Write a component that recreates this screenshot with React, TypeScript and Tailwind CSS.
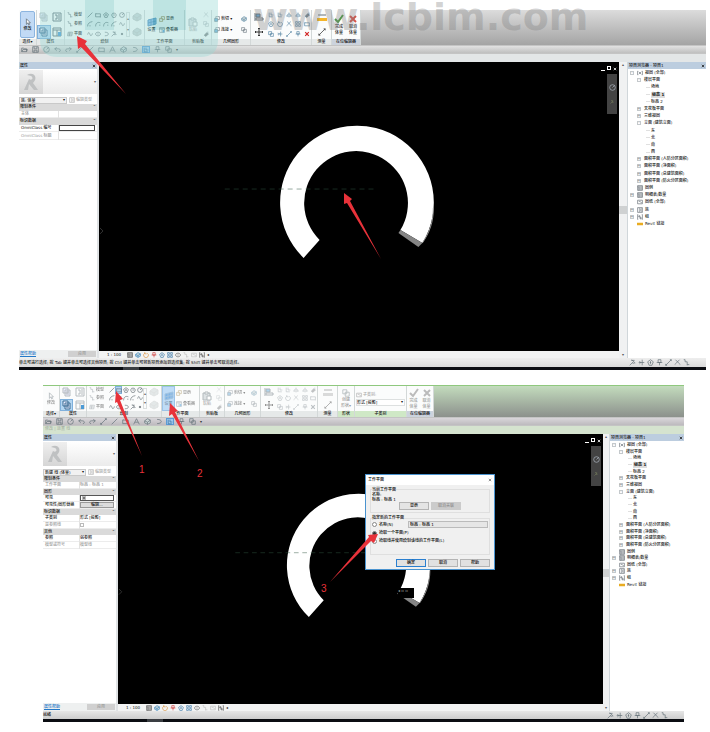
import { Fragment, type ReactNode } from 'react';
import clsx from 'clsx';

interface TreeNode {
  label: string;
  level: number;
  box?: '-' | '+';
  icon?: string;
  active?: boolean;
}

interface PropRow {
  label: string;
  group?: boolean;
  muted?: boolean;
  value?: string;
  kind?: 'focus' | 'check' | 'button' | 'uncheck';
}

const TREE: TreeNode[] = [
  { label: '视图 (全部)', level: 0, box: '-', icon: 'views' },
  { label: '楼层平面', level: 1, box: '-' },
  { label: '场地', level: 2 },
  { label: '标高 1', level: 2, active: true },
  { label: '标高 2', level: 2 },
  { label: '天花板平面', level: 1, box: '+' },
  { label: '三维视图', level: 1, box: '+' },
  { label: '立面 (建筑立面)', level: 1, box: '-' },
  { label: '东', level: 2 },
  { label: '北', level: 2 },
  { label: '南', level: 2 },
  { label: '西', level: 2 },
  { label: '面积平面 (人防分区面积)', level: 1, box: '+' },
  { label: '面积平面 (净面积)', level: 1, box: '+' },
  { label: '面积平面 (总建筑面积)', level: 1, box: '+' },
  { label: '面积平面 (防火分区面积)', level: 1, box: '+' },
  { label: '图例', level: 0, icon: 'legend' },
  { label: '明细表/数量', level: 0, box: '+', icon: 'legend' },
  { label: '图纸 (全部)', level: 0, icon: 'sheet' },
  { label: '族', level: 0, box: '+', icon: 'family' },
  { label: '组', level: 0, box: '+', icon: 'group' },
  { label: 'Revit 链接', level: 0, icon: 'link' },
];

const FAMILY_PROPS: PropRow[] = [
  { label: '限制条件', group: true },
  { label: '主体', muted: true },
  { label: '标识数据', group: true },
  { label: 'OmniClass 编号', kind: 'focus' },
  { label: 'OmniClass 标题', muted: true },
];

const LINE_PROPS: PropRow[] = [
  { label: '限制条件', group: true },
  { label: '工作平面', muted: true, value: '标高 : 标高 1' },
  { label: '图形', group: true },
  { label: '可见', kind: 'check' },
  { label: '可见性/图形替换', kind: 'button', value: '编辑...' },
  { label: '标识数据', group: true },
  { label: '子类别', value: '形式 [投影]' },
  { label: '是参照线', muted: true, kind: 'uncheck' },
  { label: '其他', group: true },
  { label: '参照', value: '弱参照' },
  { label: '模型或符号', muted: true, value: '模型线' },
];

// All glyphs live on a 10x10 grid
const ICONS: Record<string, ReactNode> = {
  cursor: <path d="M3 1v7l2-2 1 3 1-1-1-2h2z" fill="#fff" />,
  props: (
    <>
      <path d="M1 1h5v5H1zM3 3h5v6H3z" fill="#eef" />
      <path d="M4 5h3M4 7h3" />
    </>
  ),
  family: <path d="M1 1h8v8H1zM3 3h2v4H3M6 3h2M6 5h2M6 7h2" />,
  table: (
    <>
      <path d="M1 1h8v8H1zM1 3h8M5 3v6" />
      <path d="M6 5h3v4H6z" fill="#4c9bd6" stroke="none" />
    </>
  ),
  curve: <path d="M1 1h2v3h3v5M6 8h3" />,
  plane: <path d="M2 2h7L8 8H1zM2 5h6M5 2L4 8" />,
  line: <path d="M1 9L9 1" />,
  rect: <path d="M1 3h8v5H1zM1 3l1-1M9 8l0 1" />,
  poly: <path d="M5 1l4 3-2 5H3L1 4zM5 3v4M4 5h2" />,
  polyout: <path d="M3 2h4l2 3-2 4H3L1 5zM4 5h3" />,
  circle: <path d="M5 1a4 4 0 100 8 4 4 0 100-8M5 5l3-3" />,
  arc: <path d="M1 9c0-5 3-7 8-8M5 9V7" />,
  arc2: <path d="M1 9C1 4 4 1 9 3M8 6v2" />,
  spline: <path d="M1 6c2-6 3-3 4 0s3 2 4-2" />,
  ellipse: <path d="M1 5c0-4 8-4 8 0s-8 4-8 0M5 4v2" />,
  halfell: <path d="M3 2c8 0 8 6 0 6" />,
  pick: <path d="M1 9l5-5M4 1l5 5M3 2l5 0M5 6h3" />,
  dot: <path d="M4 4h2v2H4z" fill="#333" />,
  cube: (
    <>
      <path d="M1 4l4-3 4 2v4L5 9 1 7z" fill="#ccd6d6" />
      <path d="M1 4l4 2 4-3M5 6v3" />
    </>
  ),
  bluegrid: (
    <>
      <path d="M1 3l8-2v6l-8 2z" fill="#7fb4e6" />
      <path d="M1 6l8-2M4 2v6M7 2v6" />
    </>
  ),
  show: <path d="M1 4h5v5H1zM4 4V1h5v5H6M3 6h1" />,
  paste: (
    <>
      <path d="M1 2h7v7H1z" fill="#dde2e4" />
      <path d="M3 1h3v2H3zM5 5h4v4H5z" fill="#fff" />
    </>
  ),
  cut: <path d="M2 1l6 6M8 1L2 7M1 8h1M8 8h1" />,
  copy: <path d="M1 1h5v5H1zM4 4h5v5H4z" />,
  brush: <path d="M8 1v4M6 3l3 2-4 4-3-2z" fill="#888" />,
  bool: (
    <>
      <path d="M3 1h6v5H3z" fill="#fff" />
      <path d="M1 4h5v5H1z" fill="#73b1dc" />
    </>
  ),
  align: (
    <>
      <path d="M1 1v8" />
      <path d="M2 2h4v3H2z" fill="#67b0e2" />
      <path d="M2 6h7v2H2z" fill="#fff" />
    </>
  ),
  move: (
    <path d="M5 1v8M1 5h8M4 2l1-1 1 1M4 8l1 1 1-1M2 4L1 5l1 1M8 4l1 1-1 1" />
  ),
  offset: <path d="M2 1v7h6M5 1v4h4" />,
  mirror: <path d="M5 1v8M4 3L1 7h3M6 3l3 4H6" />,
  rotate: <path d="M7 2a4 4 0 11-4 0M3 0v3h3" />,
  array: <path d="M1 1h3v3H1zM6 1h3v3H6zM1 6h3v3H1zM6 6h3v3H6z" />,
  trim: <path d="M1 5h8M6 1v8M2 3l2 2-2 2" />,
  pin: <path d="M3 1h4v4H3zM1 5h8M5 5v4" />,
  del: <path d="M2 2l6 6M8 2L2 8" strokeWidth="2" />,
  measure: (
    <>
      <path d="M1 2h8" />
      <path d="M0 5h10v3H0z" fill="#f5b52a" stroke="none" />
    </>
  ),
  dim: <path d="M1 9L9 1M1 7v2h2M7 1h2v2" />,
  check: <path d="M1 5l3 3 5-7" strokeWidth="2" />,
  views: <path d="M2 2H1v6h1M8 2h1v6H8M3 3l4 4M7 3L3 7" />,
  legend: <path d="M1 1h8v8H1zM1 3h8M3 3v6M3 5h6M3 7h6" />,
  sheet: <path d="M1 2h8v6H1zM3 4h3M6 6h2" />,
  group: <path d="M2 1H1v8h1M8 1h1v8H8M3 3h2v2H3zM5 6h2v2H5z" />,
  link: (
    <path d="M1 4h3v2H1zM4 5h2M6 4h3v2H6z" stroke="#e9ac21" strokeWidth="2" />
  ),
  open: <path d="M1 8V3h3l1 1h3v4zM1 8l2-3h6L8 8" />,
  save: <path d="M1 1h8v8H1zM3 1v3h4V1M3 9V6h4v3" />,
  undo: <path d="M4 2L1 4l3 3M1 4h5c4 0 4 4 1 4" />,
  redo: <path d="M6 2l3 2-3 3M9 4H4C0 4 0 8 3 8" />,
  text: <path d="M1 9l4-8 4 8M3 6h4" />,
};

interface IconProps {
  name: string;
  color?: string;
  className?: string;
}

function Icon({ name, color = '#66727a', className = 'size-2' }: IconProps) {
  return (
    <svg
      viewBox="0 0 10 10"
      className={clsx('shrink-0', className)}
      fill="none"
      stroke={color}
      aria-hidden="true"
    >
      {ICONS[name]}
    </svg>
  );
}

function IconButton({ name, color, className }: IconProps) {
  return (
    <button
      aria-label={name}
      className="flex min-h-0 min-w-0 items-center justify-center"
    >
      <Icon name={name} color={color} className={className} />
    </button>
  );
}

interface PanelProps {
  label: string;
  width: string;
  children: ReactNode;
  tone?: string;
}

function Panel({ label, width, children, tone = 'bg-[#e6e9e9]' }: PanelProps) {
  return (
    <section
      className={clsx(
        'flex shrink-0 flex-col border-r border-[#d3d8d8] bg-[#fbfcfc]',
        width,
      )}
    >
      <div className="flex min-h-0 flex-1 items-stretch overflow-hidden">
        {children}
      </div>
      <div className={clsx('text-center', tone)}>{label}</div>
    </section>
  );
}

function TextTool({ icon, text, color }: { icon: string; text: string; color?: string }) {
  return (
    <button className="flex items-center gap-px whitespace-nowrap">
      <Icon name={icon} color={color} className="size-1.5" />
      {text}
    </button>
  );
}

const DRAW = [
  'line', 'rect', 'poly', 'polyout', 'circle',
  'arc', 'arc2', 'arc2', 'arc', 'spline',
  'spline', 'ellipse', 'halfell', 'pick', 'dot',
];

const MODIFY = [
  'offset', 'offset', 'mirror', 'mirror', 'brush',
  'poly', 'rotate', 'cut', 'array', 'rect',
  'copy', 'trim', 'dim', 'pin', 'del',
];

function Ribbon({ sketch }: { sketch: boolean }) {
  const fade = sketch ? 'opacity-50' : '';
  return (
    <div
      className={clsx(
        'flex',
        sketch
          ? 'h-8 border-t border-[#8fc87e] bg-linear-to-b from-[#c3dcbd] to-[#8c918c]'
          : 'h-[35px] bg-linear-to-b from-[#dcdcdc] to-[#a4a4a4]',
      )}
    >
      <Panel label="选择▾" width={sketch ? 'w-[17px]' : 'w-[18px]'}>
        <button
          className={clsx(
            'm-px flex flex-1 flex-col items-center justify-center rounded-xs',
            sketch ? 'opacity-50' : 'border border-[#8db5df] bg-[#c2daf5]',
          )}
        >
          <Icon name="cursor" />
          修改
        </button>
      </Panel>
      <Panel label="属性" width={sketch ? 'w-[27px]' : 'w-[28px]'}>
        <div className="grid flex-1 grid-cols-2 grid-rows-2">
          <IconButton name="props" color="#b7bdc0" className="size-2.5" />
          <IconButton name="family" color={sketch ? '#b7bdc0' : '#67747c'} className="size-2.5" />
          <button
            aria-label="属性"
            className="flex items-center justify-center border border-[#7fb0dc] bg-[#b4d6f1]"
          >
            <Icon name="props" color="#3b6d93" className="size-2.5" />
          </button>
          <IconButton name="table" color={sketch ? '#b7bdc0' : '#67747c'} className="size-2.5" />
        </div>
      </Panel>
      <Panel label="绘制" width={sketch ? 'w-[75px]' : 'w-20'}>
        <div className={clsx('flex flex-col justify-around pl-0.5', fade)}>
          <TextTool icon="curve" text="模型" />
          <TextTool icon="curve" text="参照" />
          <TextTool icon="plane" text="平面" />
        </div>
        <div className="ml-1 grid flex-1 grid-cols-5 grid-rows-3">
          {DRAW.map((name, i) => (
            <Fragment key={i}>
              {sketch && i === 1 ? (
                <button
                  aria-label={name}
                  className="flex items-center justify-center border border-[#7fb0dc] bg-[#b4d6f1]"
                >
                  <Icon name={name} className="size-1.5" />
                </button>
              ) : (
                <IconButton name={name} className="size-1.5" color="#59636a" />
              )}
            </Fragment>
          ))}
        </div>
        <div className="my-0.5 flex w-1 flex-col justify-around border border-[#dadede] leading-[4px] text-[#666]">
          <span>▴</span>
          <span>▾</span>
        </div>
        <div className={clsx('flex w-[14px] flex-col justify-around', fade)}>
          <IconButton name="cube" color="#c4c8c8" className="size-2.5" />
          <IconButton name="cube" color="#c4c8c8" className="size-2.5" />
        </div>
      </Panel>
      <Panel label="工作平面" width={sketch ? 'w-[38px]' : 'w-10'}>
        <button
          className={clsx(
            'flex w-[13px] flex-col items-center justify-center',
            sketch && 'border border-[#9cc3e8] bg-[#bfdcf6] text-[#7d97ad]',
          )}
        >
          <Icon name="bluegrid" color={sketch ? '#a3c4e0' : '#4d8cc0'} className="size-2.5" />
          设置
        </button>
        <div className={clsx('flex flex-1 flex-col justify-evenly pl-px', fade)}>
          <TextTool icon="show" text="显示" color="#8b6f2a" />
          <TextTool icon="table" text="查看器" />
        </div>
      </Panel>
      <Panel label="剪贴板" width={sketch ? 'w-[25px]' : 'w-[27px]'}>
        <button className="flex flex-1 flex-col items-center justify-center text-[#aaa]">
          <Icon name="paste" color="#b3babd" className="size-2.5" />
          粘贴
        </button>
        <div className={clsx('flex w-2.5 flex-col justify-around', fade)}>
          <IconButton name="cut" color="#b3babd" className="size-1.5" />
          <IconButton name="copy" color="#b3babd" className="size-1.5" />
          <IconButton name="brush" color="#777f84" className="size-1.5" />
        </div>
      </Panel>
      <Panel label="几何图形" width={sketch ? 'w-[36px]' : 'w-[39px]'}>
        <div className={clsx('flex flex-1 flex-col justify-evenly pl-0.5', fade)}>
          <TextTool icon="bool" text="剪切 ▾" />
          <TextTool icon="bool" text="连接 ▾" />
        </div>
        <div className={clsx('flex w-3 flex-col justify-evenly', fade)}>
          <IconButton name="cube" color="#5a8aa8" className="size-1.5" />
          <IconButton name="copy" className="size-1.5" />
        </div>
      </Panel>
      <Panel label="修改" width={sketch ? 'w-[57px]' : 'w-[61px]'}>
        <div className={clsx('flex w-[15px] flex-col justify-around', fade)}>
          <IconButton name="align" className="size-2.5" />
          <IconButton name="move" color="#333" className="size-2.5" />
        </div>
        <div className={clsx('grid flex-1 grid-cols-5 grid-rows-3', fade)}>
          {MODIFY.map((name, i) => (
            <IconButton
              key={i}
              name={name}
              color={name === 'del' && !sketch ? '#d22626' : sketch ? '#7b858b' : '#47799a'}
              className="size-1.5"
            />
          ))}
        </div>
      </Panel>
      <Panel label="测量" width="w-5">
        <div className={clsx('flex flex-1 flex-col justify-around', sketch && 'opacity-50 grayscale')}>
          <IconButton name="measure" className="size-2.5" />
          <IconButton name="dim" color="#444" className="size-2" />
        </div>
      </Panel>
      {sketch && (
        <>
          <Panel label="形状" width="w-[17px]" tone="bg-[#cfe8c6]">
            <button className="flex flex-1 flex-col items-center justify-center text-[#999]">
              <Icon name="copy" color="#b3babd" className="size-2" />
              创建
              <span>形状▾</span>
            </button>
          </Panel>
          <Panel label="子类别" width="w-[52px]" tone="bg-[#cfe8c6]">
            <div className="flex flex-1 flex-col justify-center gap-px px-px">
              <label htmlFor="subcategory" className="flex items-center gap-px text-[#aaa]">
                <Icon name="sheet" color="#aaa" className="size-1.5" />
                子类别:
              </label>
              <div className="relative flex">
                <select
                  id="subcategory"
                  className="h-[7px] w-full appearance-none border border-[#dde0e0] bg-white leading-[5px]"
                >
                  <option>形式 [投影]</option>
                </select>
                <span className="pointer-events-none absolute right-0.5">▾</span>
              </div>
            </div>
          </Panel>
        </>
      )}
      <Panel label="在位编辑器" width={sketch ? 'w-[27px]' : 'w-[29px]'} tone="bg-[#ccd3dd]">
        {[
          { name: 'check', text: '完成', color: sketch ? '#bbb' : '#4c9a45' },
          { name: 'del', text: '取消', color: sketch ? '#bbb' : '#d9534a' },
        ].map((b) => (
          <button
            key={b.name}
            className={clsx(
              'flex flex-1 flex-col items-center justify-center',
              sketch && 'text-[#999]',
            )}
          >
            <Icon name={b.name} color={b.color} className="size-2.5" />
            <span>{b.text}</span>
            <span>体量</span>
          </button>
        ))}
      </Panel>
    </div>
  );
}

const QUICK = ['open', 'save', 'circle', 'undo', 'redo', 'dim', 'line', 'rect', 'text', 'cube', 'halfell'];

function QuickBar({ sketch }: { sketch: boolean }) {
  return (
    <div
      className={clsx(
        'flex h-[9px] items-center gap-1 border-y border-[#c4c4c4] bg-linear-to-b pl-0.5',
        sketch ? 'from-[#d9d6da] to-[#bdbabe]' : 'from-[#e2e2e2] to-[#bfbfbf]',
      )}
    >
      {QUICK.map((name) => (
        <IconButton key={name} name={name} className="size-[7px]" />
      ))}
      <button
        aria-label="thin lines"
        className="flex h-[7px] w-2 items-center border border-[#5b9bd5] bg-[#9dc8ee]"
      >
        <Icon name="offset" color="#25608f" className="size-1.5" />
      </button>
      <IconButton name="pin" className="size-[7px]" />
      <IconButton name="copy" className="size-[7px]" />
      <span className="text-[#333]">▾</span>
    </div>
  );
}

function CheckBox({ label, checked }: { label: string; checked: boolean }) {
  return (
    <input
      type="checkbox"
      aria-label={label}
      defaultChecked={checked}
      className="block size-1 appearance-none border border-[#bbb] checked:bg-[#777]"
    />
  );
}

function PropValue({ row }: { row: PropRow }) {
  if (row.kind === 'focus') {
    return (
      <input
        aria-label={row.label}
        className="block h-1.5 w-full border border-[#444] bg-white"
      />
    );
  }
  if (row.kind === 'check') {
    return (
      <div className="border border-[#555] pl-px">
        <CheckBox label={row.label} checked />
      </div>
    );
  }
  if (row.kind === 'uncheck') return <CheckBox label={row.label} checked={false} />;
  if (row.kind === 'button') {
    return (
      <button className="block w-full border border-[#999] bg-[#dcdcdc] leading-[4px]">
        {row.value}
      </button>
    );
  }
  return <>{row.value}</>;
}

interface SidebarProps {
  type: string;
  rows: PropRow[];
  sketch: boolean;
}

function Properties({ type, rows, sketch }: SidebarProps) {
  return (
    <aside
      className={clsx(
        'flex shrink-0 flex-col border-r-2 border-[#dfe2e4] bg-white',
        sketch ? 'w-[75px]' : 'w-20',
      )}
    >
      <header className="flex h-[7px] items-center justify-between bg-[#bccddf] px-px">
        <span>属性</span>
        <button aria-label="关闭">
          <Icon name="del" color="#222" className="size-1" />
        </button>
      </header>
      <div className="mt-px flex h-6 items-center justify-between bg-linear-to-b from-white to-[#ebebeb] pr-px">
        <svg
          viewBox="0 0 24 24"
          className="h-full bg-linear-to-b from-[#efefef] to-[#d6d6d6]"
          aria-hidden="true"
        >
          <path
            d="M8 5c6-4 12 2 6 8l5 7h-4l-5-6-1 6H5l5-11c3 2 5-1 2-3z"
            fill="#bfc1c2"
          />
        </svg>
        <span className="text-[#666]">▾</span>
      </div>
      <div className="mt-0.5 flex h-2 items-center gap-0.5">
        <div className="relative flex flex-1">
          <select
            aria-label="类型"
            className="h-[7px] w-full appearance-none border border-[#c9c9c9] bg-[#f1f1f1] px-px leading-[5px]"
          >
            <option>{type}</option>
          </select>
          <span className="pointer-events-none absolute right-0.5">▾</span>
        </div>
        <button className="flex w-7 items-center gap-px text-[#aaa]">
          <Icon name="family" color="#aaa" className="size-1.5" />
          编辑类型
        </button>
      </div>
      <table className={clsx('w-full table-fixed', sketch ? 'h-[73px]' : 'h-9')}>
        <tbody>
          {rows.map((row) =>
            row.group ? (
              <tr key={row.label} className="bg-[#dadada]">
                <th colSpan={2} className="p-0 text-left font-medium">
                  <div className="flex justify-between px-px">
                    {row.label}
                    <span>⌃</span>
                  </div>
                </th>
              </tr>
            ) : (
              <tr
                key={row.label}
                className={clsx('border-b border-[#ececec]', row.muted && 'text-[#999]')}
              >
                <td className="border-r border-[#e2e2e2] p-0 pl-0.5 whitespace-nowrap">
                  {row.label}
                </td>
                <td className="p-0 pr-0.5">
                  <PropValue row={row} />
                </td>
              </tr>
            ),
          )}
        </tbody>
      </table>
      <footer className="mt-auto flex h-2 items-center justify-between bg-[#eef0f0] px-px">
        <a href="#help" className="text-[#2478c8] underline">
          属性帮助
        </a>
        <button className="w-7 bg-[#d0d0d0] text-[#999]">应用</button>
      </footer>
    </aside>
  );
}

function Browser({ sketch }: { sketch: boolean }) {
  return (
    <aside
      className={clsx(
        'shrink-0 border-l border-[#d0d6da] bg-white',
        sketch ? 'w-[75px]' : 'w-[79px]',
      )}
    >
      <header className="flex h-[7px] items-center justify-between bg-[#bccddf] px-px">
        <span>项目浏览器 - 项目1</span>
        <button aria-label="关闭">
          <Icon name="del" color="#222" className="size-1" />
        </button>
      </header>
      <ul
        className={clsx(
          'flex flex-col justify-between pt-px pl-0.5 whitespace-nowrap',
          sketch ? 'h-[147px]' : 'h-[158px]',
        )}
      >
        {TREE.map((node) => (
          <li
            key={node.label}
            className={clsx(
              'flex items-center',
              node.level === 1 && 'pl-[7px]',
              node.level === 2 && 'pl-[14px]',
            )}
          >
            <span className="flex w-[7px] items-center">
              {node.box && (
                <span className="flex size-1 items-center justify-center border border-[#c4c9cc] text-[#888]">
                  {node.box}
                </span>
              )}
              {node.level === 2 && <span className="ml-0.5 h-px w-1 bg-[#e0e0e0]" />}
            </span>
            {node.icon && (
              <Icon name={node.icon} color="#555e66" className="mr-0.5 size-1.5" />
            )}
            <span className={clsx(node.active && 'bg-[#dcdcdc] px-px font-bold')}>
              {node.label}
            </span>
          </li>
        ))}
      </ul>
    </aside>
  );
}

function Viewport() {
  return (
    <svg viewBox="0 0 521 289" className="h-full w-full" aria-hidden="true">
      <path
        d="M205 196A77 77 0 1 1 324 181L302 168A52 52 0 1 0 221 178Z"
        fill="#fff"
      />
      <path d="M302 168L324 181 320 185 300 171Z" fill="#858585" />
      <path d="M335 146C335 160 331 171 324 181" stroke="#999" fill="none" />
      <path
        d="M126 127H279"
        stroke="#2f5540"
        strokeOpacity="0.5"
        strokeDasharray="5 4"
      />
      <path d="M1 166l3 3-3 3" stroke="#333" fill="none" />
    </svg>
  );
}

function ViewBar() {
  return (
    <div className="flex h-[7px] items-center gap-0.5 bg-[#f2f3f3] pl-2">
      <span className="mr-1">1 : 100</span>
      {['legend', 'cube', 'rotate', 'pin', 'poly', 'array', 'ellipse'].map((name, i) => (
        <IconButton
          key={name}
          name={name}
          color={['#444', '#2b7fc0', '#d88a2b', '#c33', '#2b6ea3', '#2b6ea3', '#555'][i]}
          className="size-1.5"
        />
      ))}
      <IconButton name="curve" color="#bbb" className="size-1.5" />
      <IconButton name="sheet" color="#bbb" className="size-1.5" />
      <IconButton name="group" color="#444" className="size-1.5" />
      <span>◂</span>
    </div>
  );
}

interface WindowProps {
  sketch?: boolean;
  type: string;
  rows: PropRow[];
  status: string;
  dialog?: ReactNode;
  children?: ReactNode;
}

function RevitWindow({ sketch = false, type, rows, status, dialog, children }: WindowProps) {
  return (
    <div className="relative">
      <Ribbon sketch={sketch} />
      <QuickBar sketch={sketch} />
      <div
        className={clsx(
          'h-2 pl-0.5 text-[#aab5a6]',
          sketch ? 'bg-[#d5e3cf]' : 'bg-[#e3e6e7]',
        )}
      >
        {sketch && '修改 | 放置 线'}
      </div>
      <div className={clsx('flex', sketch ? 'h-[277px]' : 'h-[296px]')}>
        <Properties type={type} rows={rows} sketch={sketch} />
        <div className="flex min-w-0 flex-1 flex-col">
          <main className="relative min-h-0 flex-1 bg-black">
            <Viewport />
            <div className="absolute top-1 right-0.5 flex gap-0.5">
              <button aria-label="最小化" className="mt-1 h-px w-1 bg-white" />
              <button aria-label="还原" className="size-1 border border-white" />
              <button aria-label="关闭视图">
                <Icon name="del" color="#fff" className="size-1" />
              </button>
            </div>
            <div className="absolute top-3 right-0.5 flex h-10 w-2.5 flex-col items-center justify-evenly bg-[#434343]">
              <IconButton name="circle" color="#aeb6c2" className="size-[7px]" />
              <IconButton name="pick" color="#8d9a6a" className="size-1" />
            </div>
            {dialog}
          </main>
          <ViewBar />
        </div>
        <div
          className={clsx(
            'flex shrink-0 flex-col items-center justify-between bg-[#f0f1f2] text-[#555]',
            sketch ? 'w-1.5' : 'w-2',
          )}
        >
          <span>▴</span>
          <span className="h-2 w-full bg-[#cfd1d2]" />
          <span>▾</span>
        </div>
        <Browser sketch={sketch} />
      </div>
      <div
        className={clsx(
          'flex items-center justify-between pr-4 whitespace-nowrap',
          sketch
            ? 'h-2 bg-linear-to-b from-[#e6e6e6] to-[#cdcdcd]'
            : 'h-[9px] bg-linear-to-b from-[#eeeeee] to-[#dadada]',
        )}
      >
        <span>{status}</span>
        <span className="flex gap-0.5">
          {['pick', 'trim', 'poly', 'pin', 'dim', 'cut', 'curve'].map((name) => (
            <IconButton key={name} name={name} className="size-[7px]" />
          ))}
        </span>
      </div>
      <div className="flex h-[3px] bg-[#0b0d12]">
        <span className="ml-26 w-4 bg-[#3a3d42]" />
      </div>
      {children}
    </div>
  );
}

function WorkPlaneDialog() {
  return (
    <form className="absolute top-10 left-[247px] w-[130px] border border-[#4a93cf] bg-[#f0f0f0] pb-0.5 text-black">
      <header className="flex h-2.5 items-center justify-between bg-white px-0.5">
        <span>工作平面</span>
        <button type="button" aria-label="关闭">
          <Icon name="del" color="#777" className="size-1" />
        </button>
      </header>
      <fieldset className="mx-1 mt-0.5 border border-[#dfdfdf] px-px pb-0.5">
        <legend className="leading-[5px]">当前工作平面</legend>
        <p className="leading-[5px]">名称:</p>
        <p className="leading-[5px]">标高 : 标高 1</p>
        <div className="flex justify-center gap-0.5">
          <button type="button" className="h-2 w-[30px] border border-[#b4b4b4] bg-[#e4e4e4]">
            显示
          </button>
          <button type="button" className="h-2 w-[30px] bg-[#cbcbcb] text-[#8c8c8c]">
            取消关联
          </button>
        </div>
      </fieldset>
      <fieldset className="mx-1 mt-0.5 flex flex-col gap-0.5 border border-[#dfdfdf] px-px pb-2.5">
        <legend>指定新的工作平面</legend>
        <div className="flex items-center">
          <label className="flex flex-1 items-center gap-0.5">
            <Radio /> 名称(N)
          </label>
          <select
            aria-label="名称"
            className="h-[7px] w-20 appearance-none border border-[#bbb] bg-[#e6e6e6] px-px leading-[5px]"
          >
            <option>标高 : 标高 1</option>
          </select>
        </div>
        <label className="flex items-center gap-0.5">
          <Radio checked /> 拾取一个平面(P)
        </label>
        <label className="flex items-center gap-0.5">
          <Radio /> 拾取线并使用绘制该线的工作平面(L)
        </label>
      </fieldset>
      <div className="mt-1 flex justify-end gap-0.5 pr-1">
        <button type="button" className="h-2 w-[30px] border border-[#2a7fd0] bg-[#e1e1e1]">
          确定
        </button>
        <button type="button" className="h-2 w-[30px] border border-[#b4b4b4] bg-[#e1e1e1]">
          取消
        </button>
        <button type="button" className="h-2 w-[30px] border border-[#b4b4b4] bg-[#e1e1e1]">
          帮助
        </button>
      </div>
    </form>
  );
}

function Radio({ checked = false }: { checked?: boolean }) {
  return (
    <input
      type="radio"
      name="plane"
      defaultChecked={checked}
      className="size-[5px] appearance-none rounded-full border border-[#888] bg-white checked:bg-[#333]"
    />
  );
}

export default function App() {
  return (
    <div className="overflow-hidden bg-white pt-2.5 font-['DejaVu_Sans','Noto_Sans_CJK_SC',sans-serif] text-[4px] leading-[6px] font-medium text-[#111]">
      <div className="mr-1 ml-[19px]">
        <RevitWindow
          type="族: 体量"
          rows={FAMILY_PROPS}
          status="单击可进行选择; 按 Tab 键并单击可选择其他项目; 按 Ctrl 键并单击可将新项目添加到选择集; 按 Shift 键并单击可取消选择。"
        >
          {/* watermark */}
          <svg
            viewBox="0 0 178 58"
            className="pointer-events-none absolute -top-2.5 left-[21px] h-[58px] w-[178px] opacity-40"
            aria-hidden="true"
          >
            <path d="M0 0H178V40Q178 57 160 57H18Q0 57 0 40Z" fill="#9bdad6" />
            <path d="M45 0H74V30H45ZM113 0H146V30H113Z" fill="#5fbdb9" />
          </svg>
          <p className="pointer-events-none absolute -top-3 left-[234px] text-[38px] leading-none font-bold text-[#808080]/35">
            www.lcbim.com
          </p>
          <svg
            viewBox="0 0 370 260"
            className="pointer-events-none absolute top-0 left-0 h-[260px] w-[370px]"
            fill="#e8323a"
            aria-hidden="true"
          >
            <path d="M58 26L68 31 66 34 107 84 62 37 59 39Z" />
            <path d="M325 183L333 189 331 191 362 249 328 193 325 194Z" />
          </svg>
        </RevitWindow>
      </div>
      <div className="mt-[15px] mr-[26px] mb-3 ml-[43px]">
        <RevitWindow
          sketch
          type="新建 线 (体量)"
          rows={LINE_PROPS}
          status="就绪"
          dialog={
            <>
              <WorkPlaneDialog />
              <span className="absolute top-[154px] left-[280px] h-2.5 w-4 bg-black text-[#aaa]">
                ◂ ▫ ▫
              </span>
            </>
          }
        >
          <svg
            viewBox="0 0 350 220"
            className="pointer-events-none absolute top-0 left-0 h-[220px] w-[350px]"
            fill="#e8323a"
            aria-hidden="true"
          >
            <path d="M73 6L80 14 77 15 99 71 74 17 72 18Z" />
            <path d="M127 18L135 26 132 27 156 76 129 29 126 31Z" />
            <path d="M335 149L331 158 328 156 287 197 326 152 325 150Z" />
          </svg>
          <div className="pointer-events-none font-['Liberation_Sans'] text-[10px] text-[#e8323a]">
            <span className="absolute top-[82px] left-24">1</span>
            <span className="absolute top-[86px] left-[154px]">2</span>
            <span className="absolute top-[201px] left-[278px]">3</span>
          </div>
        </RevitWindow>
      </div>
    </div>
  );
}
